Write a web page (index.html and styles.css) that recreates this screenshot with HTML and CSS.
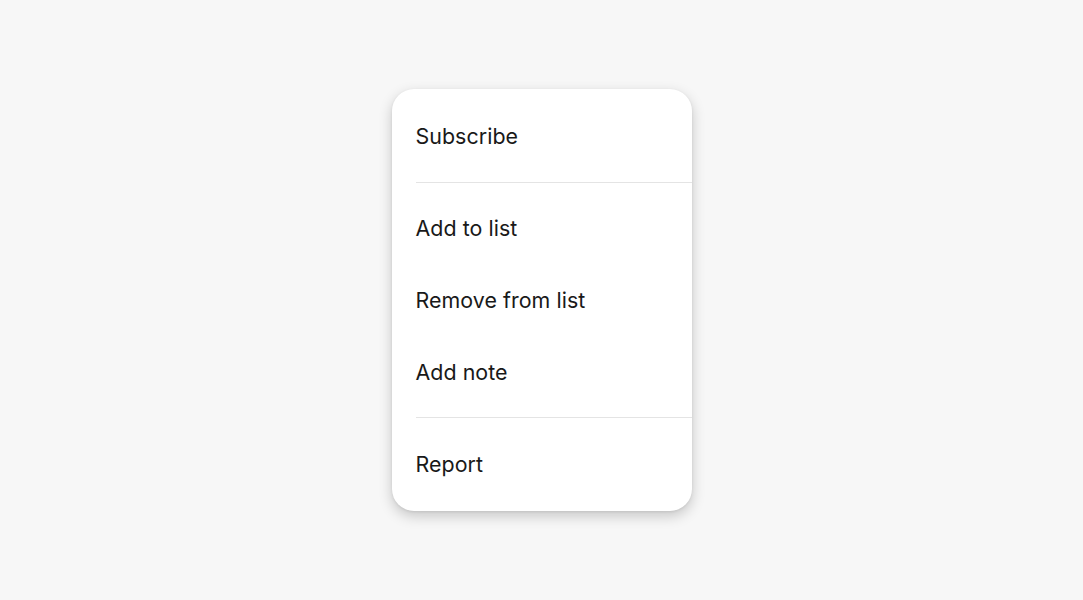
FILE: index.html
```html
<!DOCTYPE html>
<html lang="en">
<head>
<meta charset="utf-8">
<title>Menu</title>
<link rel="stylesheet" href="styles.css">
</head>
<body>
<div class="page">
  <div class="menu" role="menu">
    <div class="group group-first">
      <div class="item" role="menuitem">Subscribe</div>
    </div>
    <div class="divider"></div>
    <div class="group group-middle">
      <div class="item" role="menuitem">Add to list</div>
      <div class="item" role="menuitem">Remove from list</div>
      <div class="item" role="menuitem">Add note</div>
    </div>
    <div class="divider"></div>
    <div class="group group-last">
      <div class="item" role="menuitem">Report</div>
    </div>
  </div>
</div>
</body>
</html>
```
FILE: styles.css
```css
html, body {
  margin: 0;
  padding: 0;
  height: 100%;
}
body {
  background: #f7f7f7;
  font-family: "Inter", "Noto Sans", sans-serif;
  color: #191919;
}
.page {
  height: 100%;
  display: flex;
  align-items: center;
  justify-content: center;
}
.menu {
  width: 300px;
  background: #ffffff;
  border-radius: 22px;
  box-shadow: 0 5px 14px rgba(0, 0, 0, 0.2), 0 1px 3px rgba(0, 0, 0, 0.08);
  overflow: hidden;
}
.group-first {
  padding: 11px 0 10px;
}
.group-middle {
  padding: 9px 0;
}
.group-last {
  padding: 10px 0 11px;
}
.item {
  height: 72px;
  display: flex;
  align-items: center;
  padding-left: 24px;
  font-size: 21.4px;
  letter-spacing: 0.05px;
}
.divider {
  height: 1px;
  background: #e4e4e4;
  margin-left: 24px;
}
```
